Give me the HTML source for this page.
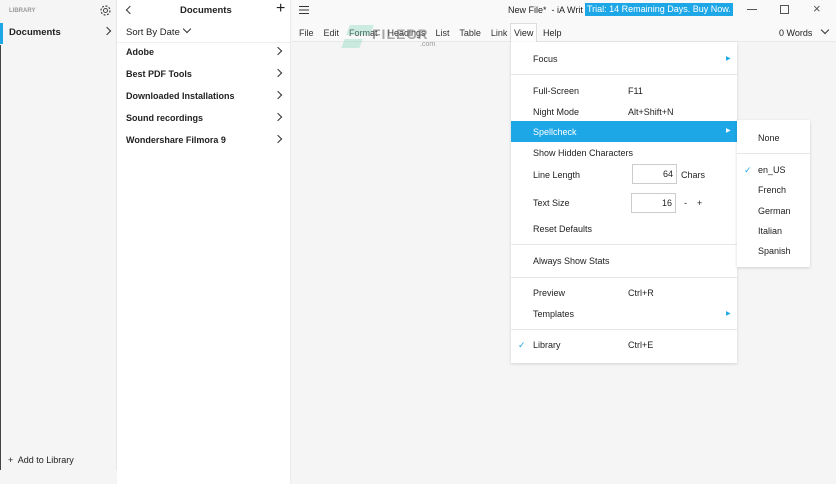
<!DOCTYPE html>
<html><head><meta charset="utf-8"><style>
*{margin:0;padding:0;box-sizing:border-box}
body{width:836px;height:484px;overflow:hidden;font-family:"Liberation Sans",sans-serif;font-size:9px;color:#222;background:#f5f5f5;position:relative}
.a{position:absolute;white-space:nowrap}
.b{font-weight:bold}
.chev{position:absolute;width:6px;height:6px;border-right:1.3px solid #333;border-top:1.3px solid #333;transform:rotate(45deg)}
</style></head><body>
<div class="a" style="left:0;top:0;width:117px;height:470px;background:#f5f5f5;border-right:1px solid #e6e6e6"></div>
<div class="a" style="left:0;top:45px;width:1px;height:425px;background:#444"></div>
<div class="a" style="left:0;top:23px;width:3px;height:21px;background:#1ea7e6"></div>
<div class="a" style="left:9px;top:8px;font-size:6px;color:#999;font-weight:bold">LIBRARY</div>
<svg class="a" style="left:99px;top:4px" width="13" height="13" viewBox="0 0 13 13"><circle cx="6.5" cy="6.5" r="2" fill="none" stroke="#444" stroke-width="1"/><circle cx="6.5" cy="6.5" r="4.5" fill="none" stroke="#444" stroke-width="1.2" stroke-dasharray="2 1.5"/></svg>
<div class="a b" style="left:9px;top:27px;font-size:9.5px">Documents</div>
<div class="chev" style="left:104px;top:28px"></div>
<div class="a" style="left:8px;top:455px;font-size:9px">+&nbsp; Add to Library</div>
<div class="a" style="left:117px;top:0;width:174px;height:484px;background:#fff;border-right:1px solid #ececec"></div>
<div class="a" style="left:117px;top:42px;width:174px;height:1px;background:#eee"></div>
<div class="chev" style="left:127px;top:7px;transform:rotate(-135deg)"></div>
<div class="a b" style="left:180px;top:5px;font-size:9.5px">Documents</div>
<div class="a" style="left:276px;top:0px;font-size:16px;font-weight:300">+</div>
<div class="a" style="left:126px;top:27px;font-size:9.5px">Sort By Date</div>
<div class="chev" style="left:184px;top:26px;transform:rotate(135deg)"></div>
<div class="a b" style="left:126px;top:47px">Adobe</div>
<div class="a b" style="left:126px;top:69px">Best PDF Tools</div>
<div class="a b" style="left:126px;top:91px">Downloaded Installations</div>
<div class="a b" style="left:126px;top:113px">Sound recordings</div>
<div class="a b" style="left:126px;top:135px">Wondershare Filmora 9</div>
<div class="chev" style="left:275px;top:48px"></div>
<div class="chev" style="left:275px;top:70px"></div>
<div class="chev" style="left:275px;top:92px"></div>
<div class="chev" style="left:275px;top:114px"></div>
<div class="chev" style="left:275px;top:136px"></div>
<div class="a" style="left:292px;top:0;width:544px;height:42px;background:#f9f9f9;border-bottom:1px solid #e8e8e8"></div>
<div class="a" style="left:299px;top:6px;width:10px;height:1.3px;background:#333;box-shadow:0 3.5px #333,0 7px #333"></div>
<div class="a" style="left:508px;top:5px">New File* &nbsp;- iA Writ</div>
<div class="a" style="left:585px;top:3px;background:#1ea7e6;color:#fff;padding:1px 2px;height:13px">Trial: 14 Remaining Days. Buy Now.</div>
<div class="a" style="left:747px;top:9px;width:10px;height:1px;background:#555"></div>
<div class="a" style="left:780px;top:5px;width:9px;height:9px;border:1px solid #555"></div>
<div class="a" style="left:813px;top:1px;font-size:13px;color:#555">×</div>
<div class="a" style="left:299px;top:28px;color:#333">File&nbsp;&nbsp;&nbsp; Edit&nbsp;&nbsp;&nbsp; Format&nbsp;&nbsp;&nbsp; Headings&nbsp;&nbsp;&nbsp; List&nbsp;&nbsp;&nbsp; Table&nbsp;&nbsp;&nbsp; Link</div>
<div class="a" style="left:510px;top:23px;width:27px;height:20px;background:#fff;border:1px solid #ddd;border-bottom:none"></div>
<div class="a" style="left:514px;top:28px">View</div>
<div class="a" style="left:543px;top:28px">Help</div>
<div class="a" style="left:779px;top:28px">0 Words</div>
<div class="chev" style="left:822px;top:27px;transform:rotate(135deg)"></div>
<div class="a" style="left:348px;top:25px;width:24px;height:10px;background:rgba(120,210,180,.35);transform:skewX(-20deg)"></div>
<div class="a" style="left:343px;top:39px;width:18px;height:9px;background:rgba(120,210,180,.35);transform:skewX(-20deg)"></div>
<div class="a" style="left:372px;top:26px;font-size:14px;font-weight:bold;color:rgba(110,110,110,.6);letter-spacing:1px">FILECR</div>
<div class="a" style="left:420px;top:41px;font-size:7px;color:#999">.com</div>
<div class="a" style="left:511px;top:42px;width:226px;height:321px;background:#fff;box-shadow:0 1px 3px rgba(0,0,0,.15)"></div>
<div class="a" style="left:533px;top:54px">Focus</div><div class="a" style="left:726px;top:55px;font-size:6px;color:#1ea7e6">▶</div>
<div class="a" style="left:511px;top:74px;width:226px;height:1px;background:#e6e6e6"></div>
<div class="a" style="left:533px;top:86px">Full-Screen</div><div class="a" style="left:628px;top:86px">F11</div>
<div class="a" style="left:533px;top:107px">Night Mode</div><div class="a" style="left:628px;top:107px">Alt+Shift+N</div>
<div class="a" style="left:511px;top:121px;width:226px;height:21px;background:#1ea7e6"></div>
<div class="a" style="left:533px;top:127px;color:#fff">Spellcheck</div><div class="a" style="left:726px;top:127px;font-size:6px;color:#fff">▶</div>
<div class="a" style="left:533px;top:148px">Show Hidden Characters</div>
<div class="a" style="left:533px;top:170px">Line Length</div>
<div class="a" style="left:632px;top:164px;width:45px;height:20px;border:1px solid #ccc;background:#fff;text-align:right;padding:4px 3px">64</div>
<div class="a" style="left:681px;top:170px">Chars</div>
<div class="a" style="left:533px;top:198px">Text Size</div>
<div class="a" style="left:631px;top:193px;width:45px;height:20px;border:1px solid #ccc;background:#fff;text-align:right;padding:4px 3px">16</div>
<div class="a" style="left:684px;top:198px">- &nbsp;&nbsp; +</div>
<div class="a" style="left:533px;top:224px">Reset Defaults</div>
<div class="a" style="left:511px;top:244px;width:226px;height:1px;background:#e6e6e6"></div>
<div class="a" style="left:533px;top:256px">Always Show Stats</div>
<div class="a" style="left:511px;top:277px;width:226px;height:1px;background:#e6e6e6"></div>
<div class="a" style="left:533px;top:288px">Preview</div><div class="a" style="left:628px;top:288px">Ctrl+R</div>
<div class="a" style="left:533px;top:309px">Templates</div><div class="a" style="left:726px;top:310px;font-size:6px;color:#1ea7e6">▶</div>
<div class="a" style="left:511px;top:329px;width:226px;height:1px;background:#e6e6e6"></div>
<div class="a" style="left:518px;top:340px;color:#1ea7e6">✓</div>
<div class="a" style="left:533px;top:340px">Library</div><div class="a" style="left:628px;top:340px">Ctrl+E</div>
<div class="a" style="left:737px;top:120px;width:73px;height:147px;background:#fff;box-shadow:0 1px 3px rgba(0,0,0,.15)"></div>
<div class="a" style="left:758px;top:133px">None</div>
<div class="a" style="left:737px;top:153px;width:73px;height:1px;background:#e6e6e6"></div>
<div class="a" style="left:744px;top:165px;color:#1ea7e6">✓</div>
<div class="a" style="left:758px;top:165px">en_US</div>
<div class="a" style="left:758px;top:185px">French</div>
<div class="a" style="left:758px;top:206px">German</div>
<div class="a" style="left:758px;top:226px">Italian</div>
<div class="a" style="left:758px;top:246px">Spanish</div>
</body></html>
